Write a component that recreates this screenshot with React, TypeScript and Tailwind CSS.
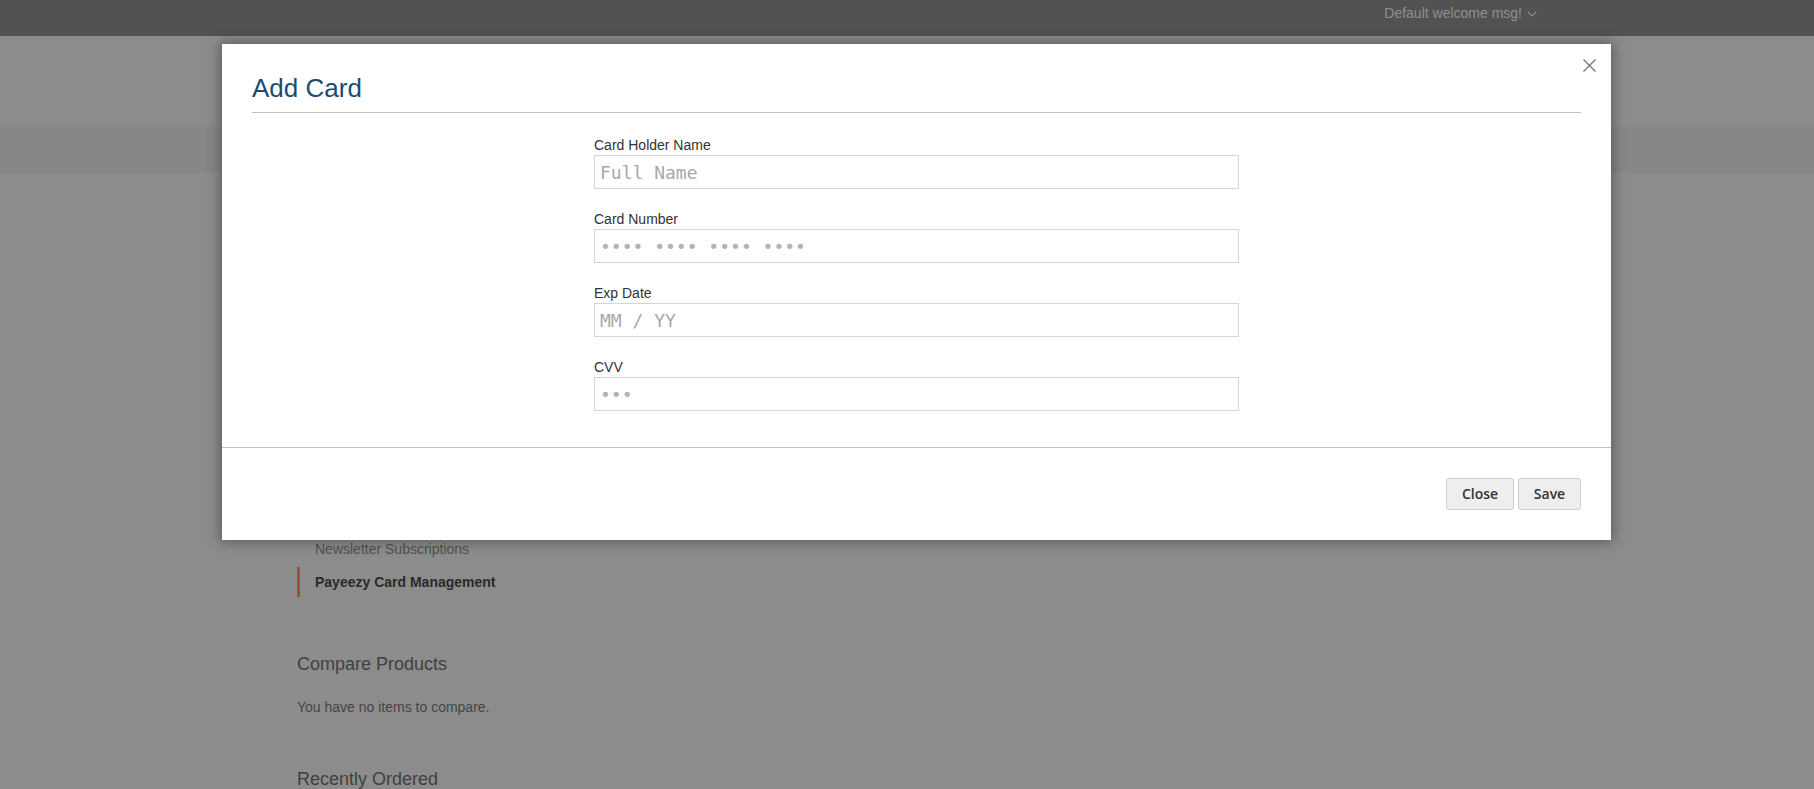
type Field = {
  id: string;
  label: string;
  placeholder: string;
  dots?: boolean;
};

const fields: Field[] = [
  { id: "holder", label: "Card Holder Name", placeholder: "Full Name" },
  { id: "number", label: "Card Number", placeholder: "•••• •••• •••• ••••", dots: true },
  { id: "exp", label: "Exp Date", placeholder: "MM / YY" },
  { id: "cvv", label: "CVV", placeholder: "•••", dots: true },
];

function Chevron() {
  return (
    <svg width="10" height="6" viewBox="0 0 10 6" fill="none" className="mt-[2px]">
      <path d="M1 1l4 4 4-4" stroke="#8c8c8c" strokeWidth="1.2" />
    </svg>
  );
}

function CloseIcon() {
  return (
    <svg width="13" height="13" viewBox="0 0 13 13" fill="none">
      <path d="M0.5 0.5l12 12M12.5 0.5l-12 12" stroke="#777" strokeWidth="1.4" />
    </svg>
  );
}

function AddCardModal() {
  return (
    <div className="absolute left-[222px] top-[44px] w-[1389px] bg-white shadow-[0_0_12px_2px_rgba(0,0,0,0.35)]">
      <button
        type="button"
        aria-label="Close"
        className="absolute right-[15px] top-[15px] flex h-[13px] w-[13px] items-center justify-center"
      >
        <CloseIcon />
      </button>

      <div className="px-[30px] pt-[29px]">
        <h1 className="border-b border-[#c1c1c1] pb-[9px] text-[26px] leading-[30px] font-normal text-[#1c4b72]">
          Add Card
        </h1>
      </div>

      <form className="mx-auto mt-[22px] mb-[36px] flex w-[645px] flex-col gap-[20px]">
        {fields.map((f) => (
          <div key={f.id} className="flex flex-col">
            <label htmlFor={f.id} className="h-[20px] text-[14px] leading-[20px] text-[#333]">
              {f.label}
            </label>
            <input
              id={f.id}
              type="text"
              placeholder={f.placeholder}
              className={
                f.dots
                  ? "h-[34px] w-full border border-[#d6d6d6] px-[5px] font-['DejaVu_Sans_Mono',monospace] text-[18px] text-[#333] outline-none placeholder:text-[#b3b3b3]"
                  : "h-[34px] w-full border border-[#d6d6d6] px-[5px] font-['DejaVu_Sans_Mono',monospace] text-[18px] text-[#333] outline-none placeholder:text-[#a8a8a8]"
              }
            />
          </div>
        ))}
      </form>

      <div className="flex justify-end gap-[4px] border-t border-[#c1c1c1] px-[30px] pt-[30px] pb-[30px]">
        <button
          type="button"
          className="h-[32px] w-[68px] rounded-[3px] border border-[#cdcdcd] bg-[#eeeeee] pb-[2px] font-['Open_Sans',sans-serif] text-[14px] font-semibold text-[#333]"
        >
          Close
        </button>
        <button
          type="button"
          className="h-[32px] w-[63px] rounded-[3px] border border-[#cdcdcd] bg-[#eeeeee] pb-[2px] font-['Open_Sans',sans-serif] text-[14px] font-semibold text-[#333]"
        >
          Save
        </button>
      </div>
    </div>
  );
}

export default function App() {
  return (
    <div className="relative h-[789px] w-full overflow-hidden bg-[#8c8c8c] font-['Liberation_Sans',Arial,sans-serif]">
      {/* top panel */}
      <div className="flex h-[36px] justify-end bg-[#525252] pt-[3px] pr-[277px]">
        <div className="flex h-[20px] items-center gap-[5px] text-[14px] leading-[20px] text-[#8f8f8f]">
          <span>Default welcome msg!</span>
          <Chevron />
        </div>
      </div>

      <div className="h-[91px]" />
      <div className="h-[46px] bg-[#878787]" />

      {/* account sidebar */}
      <div className="pl-[297px] pt-[361px]">
        <ul className="flex flex-col gap-[3px] text-[14px]">
          <li className="h-[30px] border-l-[3px] border-transparent pl-[15px] leading-[30px] text-[#505050]">
            Newsletter Subscriptions
          </li>
          <li className="h-[30px] border-l-[3px] border-[#a24f30] pl-[15px] leading-[30px] font-bold text-[#2a2a2a]">
            Payeezy Card Management
          </li>
        </ul>

        <div className="mt-[55px]">
          <h2 className="text-[18px] leading-[24px] font-normal text-[#404040]">Compare Products</h2>
          <p className="mt-[21px] text-[14px] leading-[20px] text-[#454545]">You have no items to compare.</p>
        </div>

        <div className="mt-[50px]">
          <h2 className="text-[18px] leading-[24px] font-normal text-[#404040]">Recently Ordered</h2>
        </div>
      </div>

      <AddCardModal />
    </div>
  );
}
